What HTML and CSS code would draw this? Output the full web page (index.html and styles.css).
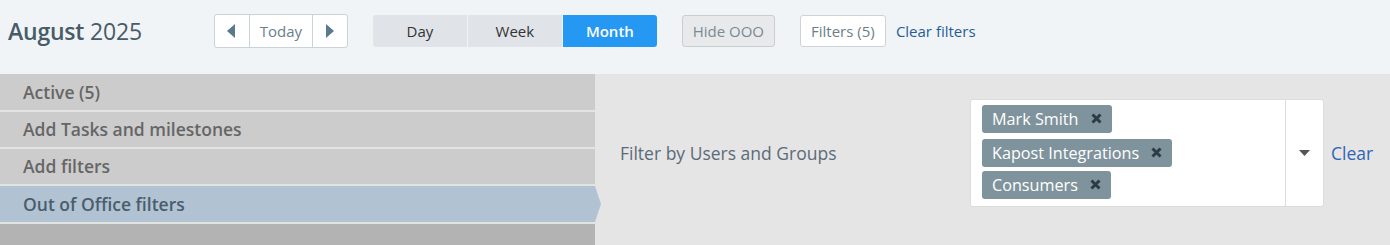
FILE: index.html
```html
<!DOCTYPE html>
<html lang="en">
<head>
    <meta charset="UTF-8">
    <title>Calendar filters</title>
    <link rel="stylesheet" href="styles.css">
</head>
<body>
    <div class="toolbar">
        <h1 class="month-title"><b>August</b> 2025</h1>
        <div class="nav-group">
            <span class="nav-btn nav-arrow"><svg width="9" height="14" viewBox="0 0 9 14"><path d="M8 0 L0 7 L8 14 Z" fill="#5a7a8c"/></svg></span>
            <span class="nav-btn nav-today">Today</span>
            <span class="nav-btn nav-arrow"><svg width="9" height="14" viewBox="0 0 9 14"><path d="M1 0 L9 7 L1 14 Z" fill="#5a7a8c"/></svg></span>
        </div>
        <div class="view-group">
            <span class="view-btn">Day</span>
            <span class="view-btn">Week</span>
            <span class="view-btn view-active">Month</span>
        </div>
        <span class="hide-ooo">Hide OOO</span>
        <span class="filters-btn">Filters (5)</span>
        <a class="clear-link">Clear filters</a>
    </div>
    <div class="panel">
        <ul class="filter-menu">
            <li>Active (5)</li>
            <li>Add Tasks and milestones</li>
            <li>Add filters</li>
            <li class="menu-active">Out of Office filters</li>
        </ul>
        <div class="filter-body">
            <label class="filter-label">Filter by Users and Groups</label>
            <div class="select-box">
                <div class="tags">
                    <span class="tag">Mark Smith <svg class="tag-x" width="11" height="11" viewBox="0 0 11 11"><path d="M1.5 1.5 L9.5 9.5 M9.5 1.5 L1.5 9.5" stroke="#2d3b45" stroke-width="3"/></svg></span>
                    <span class="tag">Kapost Integrations <svg class="tag-x" width="11" height="11" viewBox="0 0 11 11"><path d="M1.5 1.5 L9.5 9.5 M9.5 1.5 L1.5 9.5" stroke="#2d3b45" stroke-width="3"/></svg></span>
                    <span class="tag">Consumers <svg class="tag-x" width="11" height="11" viewBox="0 0 11 11"><path d="M1.5 1.5 L9.5 9.5 M9.5 1.5 L1.5 9.5" stroke="#2d3b45" stroke-width="3"/></svg></span>
                </div>
                <div class="select-caret">
                    <svg width="11" height="6" viewBox="0 0 11 6"><path d="M0 0 L11 0 L5.5 6 Z" fill="#555"/></svg>
                </div>
            </div>
            <a class="clear-select">Clear</a>
        </div>
    </div>
</body>
</html>
```

FILE: styles.css
```css
body {
    margin: 0;
    font-family: "Open Sans", sans-serif;
    background-color: #e5e5e5;
    color: #5a6a77;
}

.toolbar {
    display: flex;
    align-items: center;
    height: 74px;
    padding: 0 0 12px 8px;
    background-color: #f1f4f6;
    box-sizing: border-box;
}

.month-title {
    margin: 0 72px 0 0;
    font-size: 23px;
    font-weight: normal;
    color: #475b69;
    letter-spacing: -0.2px;
}

.month-title b {
    font-weight: 600;
}

.nav-group {
    display: flex;
    height: 34px;
    border: 1px solid #c9d2d8;
    border-radius: 3px;
    background-color: #fff;
    box-sizing: border-box;
    margin-right: 25px;
}

.nav-btn {
    display: flex;
    align-items: center;
    justify-content: center;
}

.nav-arrow {
    width: 34px;
}

.nav-today {
    width: 62px;
    border-left: 1px solid #c9d2d8;
    border-right: 1px solid #c9d2d8;
    font-size: 15px;
    color: #6b7e8a;
}

.view-group {
    display: flex;
    gap: 1px;
    height: 32px;
    margin-right: 25px;
}

.view-btn {
    display: flex;
    align-items: center;
    justify-content: center;
    width: 94px;
    background-color: #e0e4e8;
    font-size: 15px;
    color: #333;
}

.view-btn:first-child {
    border-radius: 3px 0 0 3px;
}

.view-active {
    background-color: #2498f2;
    color: #fff;
    font-weight: 600;
    border-radius: 0 3px 3px 0;
}

.hide-ooo {
    display: flex;
    align-items: center;
    justify-content: center;
    width: 93px;
    height: 32px;
    border: 1px solid #c7ced2;
    border-radius: 3px;
    background-color: #e7e9ea;
    box-sizing: border-box;
    font-size: 15px;
    color: #7b8a94;
    margin-right: 25px;
}

.filters-btn {
    display: flex;
    align-items: center;
    justify-content: center;
    width: 86px;
    height: 32px;
    border: 1px solid #ccd4d9;
    border-radius: 3px;
    background-color: #fff;
    box-sizing: border-box;
    font-size: 15px;
    color: #6d7e89;
    margin-right: 10px;
}

.clear-link {
    font-size: 15px;
    color: #1f5d99;
}

.panel {
    display: flex;
    height: 171px;
}

.filter-menu {
    list-style: none;
    margin: 0;
    padding: 0;
    width: 595px;
    background-color: #b3b3b3;
}

.filter-menu li {
    height: 36px;
    line-height: 36px;
    padding-left: 23px;
    background-color: #cccccc;
    border-bottom: 2px solid #e3e3e3;
    font-size: 17.5px;
    font-weight: 600;
    color: #666;
}

.filter-menu li:nth-child(2),
.filter-menu li:nth-child(3) {
    height: 35px;
    line-height: 35px;
}

.filter-menu li.menu-active {
    position: relative;
    background-color: #b1c3d3;
    color: #4b5d6c;
    font-weight: 600;
}

.filter-menu li.menu-active::after {
    content: "";
    position: absolute;
    right: -6px;
    top: 0;
    border-top: 18px solid transparent;
    border-bottom: 18px solid transparent;
    border-left: 6px solid #b1c3d3;
}

.filter-body {
    flex: 1;
    display: flex;
    align-items: center;
    padding: 0 0 14px 25px;
}

.filter-label {
    width: 350px;
    font-size: 17.5px;
    color: #5b6b78;
}

.select-box {
    display: flex;
    width: 354px;
    height: 108px;
    background-color: #fff;
    border: 1px solid #dcdcdc;
    border-radius: 3px;
    box-sizing: border-box;
}

.tags {
    flex: 1;
    display: flex;
    flex-direction: column;
    align-items: flex-start;
    gap: 5px;
    padding: 5px 0 0 11px;
    border-right: 1px solid #dcdcdc;
}

.tag {
    display: flex;
    align-items: center;
    height: 28px;
    padding: 0 10px;
    background-color: #7f939d;
    border-radius: 3px;
    font-size: 16.2px;
    color: #fff;
    box-sizing: border-box;
}

.tag:nth-child(2) {
    margin-top: 1px;
}

.tag:nth-child(3) {
    margin-top: -1px;
}

.tag-x {
    margin-left: 12px;
}

.select-caret {
    display: flex;
    align-items: center;
    justify-content: center;
    width: 37px;
}

.clear-select {
    margin-left: 7px;
    font-size: 17.5px;
    color: #2e66b3;
}
```
